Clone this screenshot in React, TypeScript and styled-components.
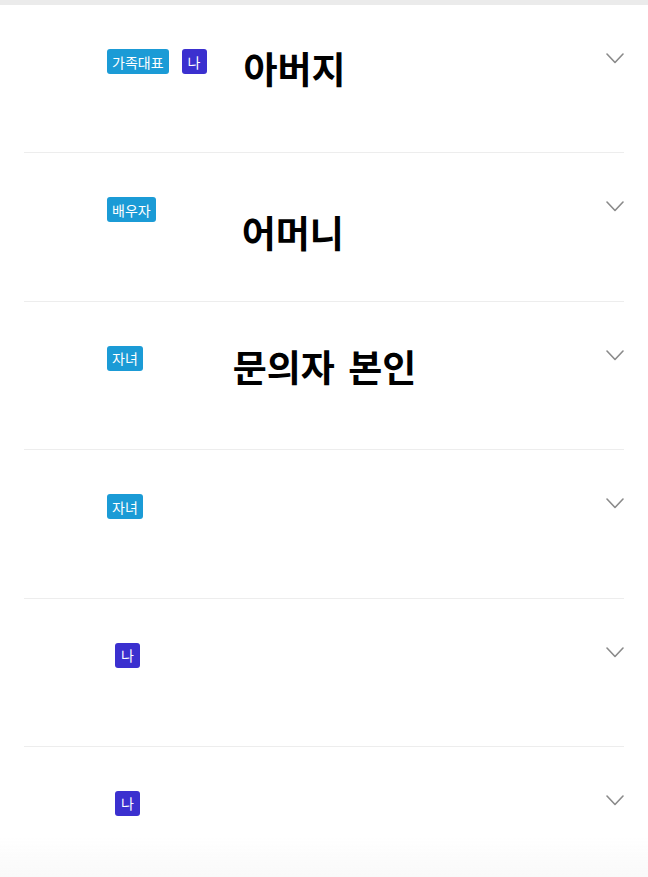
import React from "react";
import styled, { createGlobalStyle } from "styled-components";

const GlobalStyle = createGlobalStyle`
  html, body { margin: 0; padding: 0; background: #ffffff; }
  body { font-family: "Noto Sans CJK KR", "Noto Sans", sans-serif; }
`;

const Page = styled.div`
  min-height: 877px;
  background: #ffffff;
`;

const TopBar = styled.div`
  height: 5px;
  background: #ebebeb;
`;

const List = styled.ul`
  list-style: none;
  margin: 0 24px;
  padding: 0;
`;

const Row = styled.li`
  box-sizing: border-box;
  height: 148.4px;
  padding: 44px 0 0 83px;
  border-bottom: 1px solid #ededed;
  display: flex;
  align-items: flex-start;
  &:last-child { border-bottom: none; }
`;

const Badges = styled.div`
  display: flex;
  gap: 13px;
  flex-shrink: 0;
`;

const Badge = styled.span<{ $tone: "blue" | "purple"; $offset?: number }>`
  display: inline-flex;
  align-items: center;
  justify-content: center;
  box-sizing: border-box;
  height: 25px;
  min-width: 25px;
  padding: 0 5px;
  margin-left: ${(p) => p.$offset ?? 0}px;
  border-radius: 3px;
  background: ${(p) => (p.$tone === "blue" ? "#1b9bd6" : "#3b30cf")};
  color: #ffffff;
  font-family: "Noto Sans CJK KR", "Noto Sans", sans-serif;
  font-size: 14px;
  line-height: 1;
`;

const Name = styled.span<{ $left: number; $top: number }>`
  margin-left: ${(p) => p.$left}px;
  margin-top: ${(p) => p.$top}px;
  font-family: "Noto Sans CJK KR", "Noto Sans", sans-serif;
  font-weight: 700;
  font-size: 37px;
  line-height: 1;
  word-spacing: 5px;
  color: #000000;
  white-space: nowrap;
`;

const Chevron = styled.svg`
  margin-left: auto;
  margin-top: 4px;
  flex-shrink: 0;
`;

const BottomFade = styled.div`
  position: fixed;
  left: 0;
  right: 0;
  bottom: 0;
  height: 40px;
  pointer-events: none;
  background: linear-gradient(to bottom, rgba(250, 250, 250, 0), rgba(249, 249, 249, 1));
`;

type BadgeDef = { label: string; tone: "blue" | "purple"; offset?: number };
type RowDef = { badges: BadgeDef[]; name?: string; left?: number; top?: number };

const rows: RowDef[] = [
  {
    badges: [
      { label: "가족대표", tone: "blue" },
      { label: "나", tone: "purple" },
    ],
    name: "아버지",
    left: 37,
    top: 1,
  },
  { badges: [{ label: "배우자", tone: "blue" }], name: "어머니", left: 86, top: 17 },
  { badges: [{ label: "자녀", tone: "blue" }], name: "문의자 본인", left: 90, top: 2 },
  { badges: [{ label: "자녀", tone: "blue" }] },
  { badges: [{ label: "나", tone: "purple", offset: 8 }] },
  { badges: [{ label: "나", tone: "purple", offset: 8 }] },
];

const ChevronIcon = () => (
  <Chevron width="18" height="11" viewBox="0 0 18 11" fill="none">
    <polyline
      points="1,1 9,9.5 17,1"
      stroke="#8a8a8a"
      strokeWidth="1.6"
      strokeLinecap="round"
      strokeLinejoin="round"
    />
  </Chevron>
);

export default function App() {
  return (
    <Page>
      <GlobalStyle />
      <TopBar />
      <List>
        {rows.map((r, i) => (
          <Row key={i}>
            <Badges>
              {r.badges.map((b, j) => (
                <Badge key={j} $tone={b.tone} $offset={b.offset}>
                  {b.label}
                </Badge>
              ))}
            </Badges>
            {r.name && (
              <Name $left={r.left ?? 0} $top={r.top ?? 0}>
                {r.name}
              </Name>
            )}
            <ChevronIcon />
          </Row>
        ))}
      </List>
      <BottomFade />
    </Page>
  );
}
